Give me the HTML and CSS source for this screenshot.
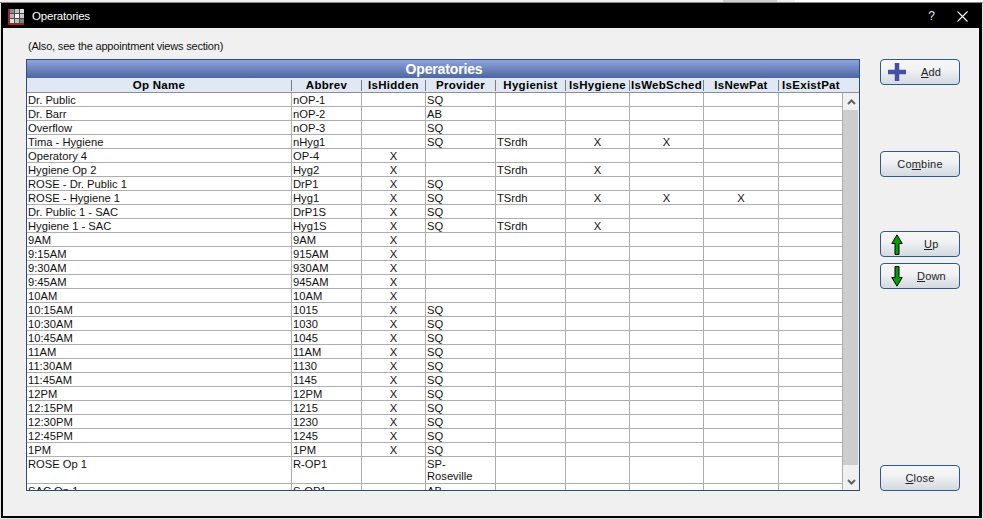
FILE: index.html
```html
<!DOCTYPE html>
<html lang="en">
<head>
<meta charset="utf-8">
<title>Operatories</title>
<link rel="stylesheet" href="styles.css">
</head>
<body>
<div class="strip"><span class="s1"></span><span class="s2"></span><span class="s3"></span><span class="s4"></span></div>
<div class="window">
  <header class="titlebar">
    <svg class="app-icon" width="16" height="16" viewBox="0 0 16 16">
      <rect x="1" y="0" width="15" height="15" fill="#4a4a4a"/>
      <rect x="2" y="0" width="4" height="4" fill="#8c8c8c"/><rect x="7" y="0" width="4" height="4" fill="#c4c4c4"/><rect x="12" y="0" width="4" height="4" fill="#dcdcdc"/>
      <rect x="2" y="5" width="4" height="4" fill="#b4b4b4"/><rect x="7" y="5" width="4" height="4" fill="#f4f4f4"/><rect x="12" y="5" width="4" height="4" fill="#cccccc"/>
      <rect x="2" y="10" width="4" height="4" fill="#e0e0e0"/><rect x="7" y="10" width="4" height="4" fill="#c0c0c0"/><rect x="12" y="10" width="4" height="4" fill="#808080"/>
      <path d="M0.5 0V15.5H16" fill="none" stroke="#e01010"/>
    </svg>
    <span class="title-text">Operatories</span>
    <span class="help">?</span>
    <svg class="close-x" width="11" height="11" viewBox="0 0 11 11"><path d="M0.5 0.5L10.5 10.5M10.5 0.5L0.5 10.5" stroke="#fff" stroke-width="1.1" fill="none"/></svg>
  </header>
  <main class="content">
    <section class="left">
      <p class="note">(Also, see the appointment views section)</p>
      <div class="grid">
        <div class="grid-title">Operatories</div>
        <div class="grid-head">
          <div class="hc c1">Op Name</div><div class="hc c2">Abbrev</div><div class="hc c3">IsHidden</div><div class="hc c4">Provider</div><div class="hc c5">Hygienist</div><div class="hc c6">IsHygiene</div><div class="hc c7">IsWebSched</div><div class="hc c8">IsNewPat</div><div class="hc c9">IsExistPat</div>
        </div>
        <div class="grid-body">
          <table class="rows">
            <colgroup><col class="c1"><col class="c2"><col class="c3"><col class="c4"><col class="c5"><col class="c6"><col class="c7"><col class="c8"><col class="c9b"></colgroup>
            <tbody>
              <tr><td>Dr. Public</td><td>nOP-1</td><td class="x"></td><td>SQ</td><td></td><td class="x"></td><td class="x"></td><td class="x"></td><td class="x"></td></tr>
              <tr><td>Dr. Barr</td><td>nOP-2</td><td class="x"></td><td>AB</td><td></td><td class="x"></td><td class="x"></td><td class="x"></td><td class="x"></td></tr>
              <tr><td>Overflow</td><td>nOP-3</td><td class="x"></td><td>SQ</td><td></td><td class="x"></td><td class="x"></td><td class="x"></td><td class="x"></td></tr>
              <tr><td>Tima - Hygiene</td><td>nHyg1</td><td class="x"></td><td>SQ</td><td>TSrdh</td><td class="x">X</td><td class="x">X</td><td class="x"></td><td class="x"></td></tr>
              <tr><td>Operatory 4</td><td>OP-4</td><td class="x">X</td><td></td><td></td><td class="x"></td><td class="x"></td><td class="x"></td><td class="x"></td></tr>
              <tr><td>Hygiene Op 2</td><td>Hyg2</td><td class="x">X</td><td></td><td>TSrdh</td><td class="x">X</td><td class="x"></td><td class="x"></td><td class="x"></td></tr>
              <tr><td>ROSE - Dr. Public 1</td><td>DrP1</td><td class="x">X</td><td>SQ</td><td></td><td class="x"></td><td class="x"></td><td class="x"></td><td class="x"></td></tr>
              <tr><td>ROSE - Hygiene 1</td><td>Hyg1</td><td class="x">X</td><td>SQ</td><td>TSrdh</td><td class="x">X</td><td class="x">X</td><td class="x">X</td><td class="x"></td></tr>
              <tr><td>Dr. Public 1 - SAC</td><td>DrP1S</td><td class="x">X</td><td>SQ</td><td></td><td class="x"></td><td class="x"></td><td class="x"></td><td class="x"></td></tr>
              <tr><td>Hygiene 1 - SAC</td><td>Hyg1S</td><td class="x">X</td><td>SQ</td><td>TSrdh</td><td class="x">X</td><td class="x"></td><td class="x"></td><td class="x"></td></tr>
              <tr><td>9AM</td><td>9AM</td><td class="x">X</td><td></td><td></td><td class="x"></td><td class="x"></td><td class="x"></td><td class="x"></td></tr>
              <tr><td>9:15AM</td><td>915AM</td><td class="x">X</td><td></td><td></td><td class="x"></td><td class="x"></td><td class="x"></td><td class="x"></td></tr>
              <tr><td>9:30AM</td><td>930AM</td><td class="x">X</td><td></td><td></td><td class="x"></td><td class="x"></td><td class="x"></td><td class="x"></td></tr>
              <tr><td>9:45AM</td><td>945AM</td><td class="x">X</td><td></td><td></td><td class="x"></td><td class="x"></td><td class="x"></td><td class="x"></td></tr>
              <tr><td>10AM</td><td>10AM</td><td class="x">X</td><td></td><td></td><td class="x"></td><td class="x"></td><td class="x"></td><td class="x"></td></tr>
              <tr><td>10:15AM</td><td>1015</td><td class="x">X</td><td>SQ</td><td></td><td class="x"></td><td class="x"></td><td class="x"></td><td class="x"></td></tr>
              <tr><td>10:30AM</td><td>1030</td><td class="x">X</td><td>SQ</td><td></td><td class="x"></td><td class="x"></td><td class="x"></td><td class="x"></td></tr>
              <tr><td>10:45AM</td><td>1045</td><td class="x">X</td><td>SQ</td><td></td><td class="x"></td><td class="x"></td><td class="x"></td><td class="x"></td></tr>
              <tr><td>11AM</td><td>11AM</td><td class="x">X</td><td>SQ</td><td></td><td class="x"></td><td class="x"></td><td class="x"></td><td class="x"></td></tr>
              <tr><td>11:30AM</td><td>1130</td><td class="x">X</td><td>SQ</td><td></td><td class="x"></td><td class="x"></td><td class="x"></td><td class="x"></td></tr>
              <tr><td>11:45AM</td><td>1145</td><td class="x">X</td><td>SQ</td><td></td><td class="x"></td><td class="x"></td><td class="x"></td><td class="x"></td></tr>
              <tr><td>12PM</td><td>12PM</td><td class="x">X</td><td>SQ</td><td></td><td class="x"></td><td class="x"></td><td class="x"></td><td class="x"></td></tr>
              <tr><td>12:15PM</td><td>1215</td><td class="x">X</td><td>SQ</td><td></td><td class="x"></td><td class="x"></td><td class="x"></td><td class="x"></td></tr>
              <tr><td>12:30PM</td><td>1230</td><td class="x">X</td><td>SQ</td><td></td><td class="x"></td><td class="x"></td><td class="x"></td><td class="x"></td></tr>
              <tr><td>12:45PM</td><td>1245</td><td class="x">X</td><td>SQ</td><td></td><td class="x"></td><td class="x"></td><td class="x"></td><td class="x"></td></tr>
              <tr><td>1PM</td><td>1PM</td><td class="x">X</td><td>SQ</td><td></td><td class="x"></td><td class="x"></td><td class="x"></td><td class="x"></td></tr>
              <tr class="tall"><td>ROSE Op 1</td><td>R-OP1</td><td class="x"></td><td>SP-<br>Roseville</td><td></td><td class="x"></td><td class="x"></td><td class="x"></td><td class="x"></td></tr>
              <tr><td>SAC Op 1</td><td>S-OP1</td><td class="x"></td><td>AB</td><td></td><td class="x"></td><td class="x"></td><td class="x"></td><td class="x"></td></tr>
            </tbody>
          </table>
          <div class="scrollbar">
            <div class="arrow"><svg width="9" height="6" viewBox="0 0 9 6"><path d="M1 5L4.5 1.5L8 5" fill="none" stroke="#606060" stroke-width="2"/></svg></div>
            <div class="thumb"></div>
            <div class="track"></div>
            <div class="arrow"><svg width="9" height="6" viewBox="0 0 9 6"><path d="M1 1L4.5 4.5L8 1" fill="none" stroke="#606060" stroke-width="2"/></svg></div>
          </div>
        </div>
      </div>
    </section>
    <aside class="side">
      <button class="btn icon-btn btn-add" type="button">
        <svg class="ic-plus" width="18" height="18" viewBox="0 0 18 18"><path d="M0 9H18M9 0V18" stroke="#4350a3" stroke-width="4.5" fill="none"/></svg>
        <span class="label"><u>A</u>dd</span>
      </button>
      <button class="btn btn-combine" type="button"><span class="label">Co<u>m</u>bine</span></button>
      <button class="btn icon-btn btn-up" type="button">
        <svg class="ic-arrow" width="12" height="21" viewBox="0 0 12 21"><path d="M6 0.8L11.2 9.5H8V20.5H4V9.5H0.8Z" fill="#00a000" stroke="#000" stroke-width="1"/></svg>
        <span class="label"><u>U</u>p</span>
      </button>
      <button class="btn icon-btn btn-down" type="button">
        <svg class="ic-arrow" width="12" height="21" viewBox="0 0 12 21"><path d="M6 20.2L11.2 11.5H8V0.5H4V11.5H0.8Z" fill="#00a000" stroke="#000" stroke-width="1"/></svg>
        <span class="label"><u>D</u>own</span>
      </button>
      <button class="btn btn-close" type="button"><span class="label"><u>C</u>lose</span></button>
    </aside>
  </main>
</div>
</body>
</html>
```
FILE: styles.css
```css
* { box-sizing: border-box; }
html, body { margin: 0; padding: 0; }
body {
  width: 983px;
  height: 519px;
  overflow: hidden;
  background: #e4e4e4;
  font-family: "Liberation Sans", Arial, sans-serif;
  font-size: 11px;
  color: #000;
  display: flex;
  flex-direction: column;
}
.strip { display: flex; height: 3px; flex: none; border-bottom: 1px solid #8a8a8a; }
.s1 { width: 723px; background: #efefef; }
.s2 { width: 54px; background: #cfcfcf; }
.s3 { width: 18px; background: #efefef; }
.s4 { flex: 1; background: #fff; }

.window {
  flex: 1;
  margin: 0 1px 1px 1px;
  border: solid #000;
  border-width: 0 3px 2px 2px;
  background: #f0f0f0;
  display: flex;
  flex-direction: column;
  min-height: 0;
}
.titlebar {
  flex: none;
  height: 25px;
  margin: 0 -3px 0 -2px;
  background: #000;
  color: #fff;
  display: flex;
  align-items: center;
  padding-left: 7px;
}
.app-icon { display: block; margin-top: 3px; }
.title-text { margin-left: 8px; font-size: 11.5px; letter-spacing: -.2px; }
.help { margin-left: auto; font-size: 12px; color: #dbeeff; }
.close-x { display: block; margin: 1px 14px 0 22px; }

.content { flex: 1; display: flex; min-height: 0; padding: 0 0 25px 23px; }
.left { width: 834px; display: flex; flex-direction: column; }
.note { margin: 12px 0 6px 2px; height: 13px; line-height: 13px; font-size: 11px; letter-spacing: -.19px; color: #111; }

.grid {
  flex: 1;
  min-height: 0;
  border: 1px solid #2e4b7d;
  background: #fff;
  display: flex;
  flex-direction: column;
  overflow: hidden;
}
.grid-title {
  flex: none;
  height: 18px;
  line-height: 19px;
  padding-left: 2px;
  text-align: center;
  font-size: 14px;
  font-weight: 700;
  letter-spacing: -.15px;
  color: #fff;
  background: linear-gradient(#8fa3df, #4c669f);
}
.grid-head {
  flex: none;
  height: 15px;
  padding-top: 2px;
  display: flex;
  background: #dfe8f3;
  border-bottom: 1px solid #8f8f8f;
}
.hc {
  height: 11px;
  line-height: 11px;
  text-align: center;
  font-weight: 700;
  font-size: 11.5px;
  letter-spacing: .28px;
  white-space: nowrap;
  border-right: 1px solid #7d7d7d;
  flex: none;
}
.hc.c1, col.c1 { width: 265px; }
.hc.c2, col.c2 { width: 70px; }
.hc.c3, col.c3 { width: 64px; }
.hc.c4, col.c4 { width: 70px; }
.hc.c5, col.c5 { width: 70px; }
.hc.c6, col.c6 { width: 64px; }
.hc.c7, col.c7 { width: 74px; }
.hc.c8, col.c8 { width: 75px; }
col.c9b { width: 64px; }
.hc.c9 { width: 80px; border-right: 0; padding-right: 16px; }

.grid-body { flex: 1; min-height: 0; display: flex; overflow: hidden; }
.rows {
  flex: none;
  width: 816px;
  height: max-content;
  table-layout: fixed;
  border-collapse: separate;
  border-spacing: 0;
  font-size: 11.2px;
  color: #111;
}
.rows td {
  height: 14px;
  padding: 1px 0 0 1px;
  line-height: 12px;
  vertical-align: top;
  border-right: 1px solid #aeaeae;
  border-bottom: 1px solid #aeaeae;
  white-space: nowrap;
  overflow: hidden;
}
.rows td.x { text-align: center; padding: 1px 0 0; }
.rows .tall td { height: 27px; }

.scrollbar { flex: none; width: 16px; background: #f0f0f0; display: flex; flex-direction: column; }
.arrow { flex: none; height: 17px; display: flex; align-items: center; justify-content: center; }
.thumb { flex: none; height: 355px; margin-right: 1px; background: #cdcdcd; }
.track { flex: 1; }

.side { width: 80px; margin-left: 20px; padding-top: 31px; display: flex; flex-direction: column; }
.btn {
  flex: none;
  width: 80px;
  height: 26px;
  padding: 0;
  border: 1px solid #2c5a8a;
  border-radius: 4px;
  background: linear-gradient(#f7f7f7, #f1f2f3 40%, #d3dae0);
  font-family: "Liberation Sans", Arial, sans-serif;
  font-size: 11px;
  letter-spacing: .2px;
  color: #222;
  display: flex;
  align-items: center;
  justify-content: center;
}
.icon-btn { justify-content: flex-start; padding-left: 7px; }
.btn-combine { margin-top: 66px; }
.btn-up { margin-top: 54px; }
.btn-down { margin-top: 6px; }
.btn-close { margin-top: auto; }
.ic-plus { flex: none; display: block; }
.ic-arrow { flex: none; display: block; margin-left: 3px; }
.btn-add .label { margin-left: 15px; }
.btn-up .label { margin-left: 21px; }
.btn-down .label { margin-left: 14px; }
```
